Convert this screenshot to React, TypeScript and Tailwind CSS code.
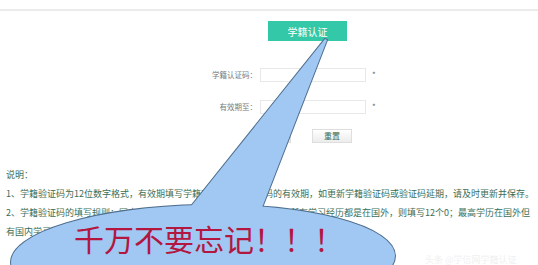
import * as React from 'react';

const BUBBLE = '#a0c8f2';
const OUTLINE = '#4f6f8f';

/** Callout drawn over the page: tail from the green button down into a tilted ellipse. */
function Callout() {
  const tail = '325,39 184,215 258,218 327,40';
  const ellipse = { cx: 203, cy: 259, rx: 192, ry: 54, transform: 'rotate(-1 203 259)' };
  return (
    <svg className="pointer-events-none absolute left-0 top-0" width={538} height={265} viewBox="0 0 538 265">
      <g stroke={OUTLINE} strokeWidth={2} fill={BUBBLE}>
        <ellipse {...ellipse} />
        <polygon points={tail} strokeLinejoin="miter" />
      </g>
      <g fill={BUBBLE}>
        <ellipse {...ellipse} />
        <polygon points={tail} />
      </g>
    </svg>
  );
}

function FormRow({ label, className }: { label: string; className: string }) {
  return (
    <div className={`flex h-[14px] items-center ${className}`}>
      <span className="w-[257px] text-right text-[7.5px] leading-none text-[#7a7a7a]">{label}</span>
      <div className="ml-[3px] h-[14px] w-[106px] border border-[#e8e8e8] bg-white" />
      <span className="ml-[6px] text-[8px] leading-none text-[#666]">*</span>
    </div>
  );
}

export default function App() {
  return (
    <div className="relative h-[265px] w-[538px] overflow-hidden bg-white font-['Noto_Sans_CJK_SC',sans-serif]">
      <div className="h-[9px]" />
      <div className="h-[2px] bg-[#ebebeb]" />

      <div className="ml-[268px] mt-[10px] flex h-[20px] w-[79px] items-center justify-center bg-[#33c8a7] text-[10px] text-white">
        学籍认证
      </div>

      <FormRow label="学籍认证码：" className="mt-[27px]" />
      <FormRow label="有效期至：" className="mt-[18px]" />

      <div className="mt-[15px] flex h-[14px]">
        <div className="ml-[252px] flex w-[39px] items-center justify-center border border-[#dedede] bg-gradient-to-b from-white to-[#ececec] text-[8px] text-[#3b6b55]">
          提交
        </div>
        <div className="ml-[21px] flex w-[40px] items-center justify-center border border-[#dedede] bg-gradient-to-b from-white to-[#ececec] text-[8px] text-[#3b6b55]">
          重置
        </div>
      </div>

      <div className="mt-[22px] whitespace-nowrap px-[6px] text-[9px] leading-[19px] text-[#3a6e57]">
        <p>说明：</p>
        <p>1、学籍验证码为12位数字格式，有效期填写学籍在线报告中验证码的有效期，如更新学籍验证码或验证码延期，请及时更新并保存。</p>
        <p>2、学籍验证码的填写规则：国内学历填写学信网在线验证报告验证码；所有学习经历都是在国外，则填写12个0；最高学历在国外但</p>
        <p>有国内学习经</p>
      </div>

      <Callout />

      <div className="absolute left-[74px] top-[225px] whitespace-nowrap text-[30px] leading-[27px] text-[#b3163f]">
        千万不要忘记！！！
      </div>

      <div className="absolute left-[425px] top-[255px] whitespace-nowrap text-[9px] leading-none text-[#f0f0f0]">
        头条 @学信网学籍认证
      </div>
    </div>
  );
}
